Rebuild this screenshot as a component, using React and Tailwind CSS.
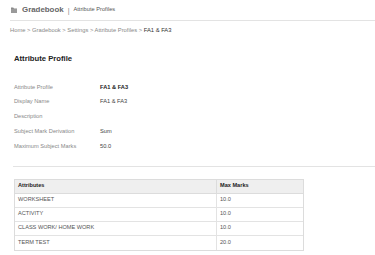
export default function App() {
  const rows = [
    ["Attribute Profile", "FA1 & FA3", true],
    ["Display Name", "FA1 & FA3", false],
    ["Description", "", false],
    ["Subject Mark Derivation", "Sum", false],
    ["Maximum Subject Marks", "50.0", false],
  ];
  const table = [
    ["WORKSHEET", "10.0"],
    ["ACTIVITY", "10.0"],
    ["CLASS WORK/ HOME WORK", "10.0"],
    ["TERM TEST", "20.0"],
  ];
  return (
    <div className="w-[375px] h-[255px] bg-white overflow-hidden" style={{ fontFamily: '"Liberation Sans", Arial, sans-serif' }}>
      <div className="ml-[10px] h-[21px] border-b border-[#e3e3e3] flex items-center">
        <svg width="8" height="8" viewBox="0 0 8 8" className="mr-[4px]">
          <path d="M1 1.5h2.2l0.8 1H7v4.5H1z" fill="#8a8a8a" />
          <rect x="1" y="3" width="6" height="4" fill="#9a9a9a" />
        </svg>
        <span className="text-[7.9px] font-bold text-[#666] leading-none">Gradebook</span>
        <span className="text-[7px] text-[#888] mx-[4px] leading-none">|</span>
        <span className="text-[5.7px] text-[#555] leading-none">Attribute Profiles</span>
      </div>
      <div className="ml-[10px] h-[20px] flex items-center text-[5.8px] text-[#888] leading-none">
        <span>Home &gt; Gradebook &gt; Settings &gt; Attribute Profiles &gt;&nbsp;</span>
        <span className="text-[#333]">FA1 &amp; FA3</span>
      </div>
      <div className="ml-[14px] h-[31px] pt-[14px] text-[7.7px] font-bold text-[#222] leading-none">
        Attribute Profile
      </div>
      <div className="ml-[14px] mt-[8px] flex flex-col">
        {rows.map(([k, v, b]) => (
          <div key={k} className="h-[14.75px] flex items-center text-[5.7px] leading-none">
            <span className="w-[86px] text-[#888]">{k}</span>
            <span className={b ? "font-bold text-[#222]" : "text-[#444]"}>{v}</span>
          </div>
        ))}
      </div>
      <div className="ml-[13px] mt-[12px] border-t border-[#e3e3e3]"></div>
      <div className="ml-[14px] mt-[12px] w-[290px] border border-[#dcdcdc] text-[5.6px] leading-none">
        <div className="flex h-[14px] bg-[#efefef] border-b border-[#dcdcdc] font-bold text-[#222]">
          <div className="w-[202px] border-r border-[#dcdcdc] flex items-center pl-[3px]">Attributes</div>
          <div className="flex-1 flex items-center pl-[3px]">Max Marks</div>
        </div>
        {table.map(([a, m], i) => (
          <div key={a} className={"flex h-[14px] text-[#555] " + (i < 3 ? "border-b border-[#e3e3e3]" : "")}>
            <div className="w-[202px] border-r border-[#e3e3e3] flex items-center pl-[3px]">{a}</div>
            <div className="flex-1 flex items-center pl-[3px]">{m}</div>
          </div>
        ))}
      </div>
    </div>
  );
}
